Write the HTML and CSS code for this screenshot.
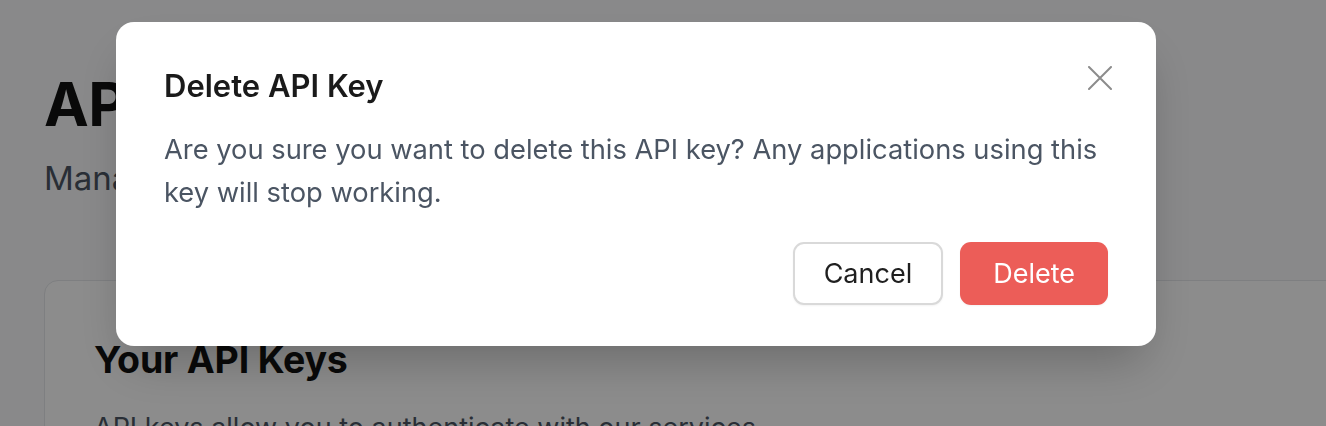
FILE: index.html
```html
<!DOCTYPE html>
<html lang="en">
<head>
<meta charset="utf-8">
<title>API Keys</title>
<link rel="stylesheet" href="styles.css">
</head>
<body>
<main class="page">
  <h1 class="page-title">API Keys</h1>
  <p class="page-subtitle">Manage your API keys and access tokens.</p>
  <section class="card">
    <h2 class="card-title">Your API Keys</h2>
    <p class="card-desc">API keys allow you to authenticate with our services.</p>
  </section>
</main>

<div class="overlay">
  <div class="modal" role="dialog" aria-modal="true">
    <button class="close" aria-label="Close">
      <svg viewBox="0 0 24 24" width="24" height="24" fill="none" stroke="currentColor" stroke-width="2" stroke-linecap="round">
        <path d="M1 1 23 23M23 1 1 23"/>
      </svg>
    </button>
    <h3 class="modal-title">Delete API Key</h3>
    <p class="modal-body">Are you sure you want to delete this API key? Any applications using this key will stop working.</p>
    <div class="actions">
      <button class="btn btn-cancel">Cancel</button>
      <button class="btn btn-delete">Delete</button>
    </div>
  </div>
</div>
</body>
</html>
```

FILE: styles.css
```css
* { box-sizing: border-box; }
html, body { margin: 0; padding: 0; }
body {
  background: #f9fafb;
  font-family: Inter, "Noto Sans", "Liberation Sans", sans-serif;
  overflow: hidden;
  width: 1326px;
  height: 426px;
}
.page {
  padding: 74px 0 0 44px;
  width: 1500px;
}
.page-title {
  margin: 0;
  font-size: 60px;
  line-height: 60px;
  font-weight: 700;
  color: #111111;
  letter-spacing: -0.5px;
}
.page-subtitle {
  margin: 22px 0 0;
  font-size: 33px;
  line-height: 44px;
  color: #4b5563;
}
.card {
  margin-top: 80px;
  background: #ffffff;
  border: 1px solid #e5e7eb;
  border-radius: 14px;
  padding: 57px 49px;
  height: 400px;
}
.card-title {
  margin: 0;
  font-size: 37.5px;
  line-height: 44px;
  font-weight: 700;
  color: #111111;
  letter-spacing: -0.2px;
}
.card-desc {
  margin: 26px 0 0;
  font-size: 27px;
  line-height: 40px;
  color: #4b5563;
}

.overlay {
  position: fixed;
  inset: 0;
  background: rgba(0, 0, 0, 0.45);
  display: flex;
  align-items: flex-start;
  padding: 22px 0 0 116px;
}
.modal {
  position: relative;
  width: 1040px;
  background: #ffffff;
  border-radius: 18px;
  padding: 46px 48px 41px;
  box-shadow: 0 25px 50px -12px rgba(0, 0, 0, 0.25);
}
.close {
  position: absolute;
  top: 44px;
  right: 44px;
  width: 24px;
  height: 24px;
  padding: 0;
  border: 0;
  background: none;
  color: #8c8c8c;
  display: flex;
}
.modal-title {
  margin: 0;
  font-size: 31px;
  line-height: 36px;
  font-weight: 600;
  color: #1a1a1a;
}
.modal-body {
  margin: 24px 0 0;
  font-size: 27.3px;
  line-height: 43px;
  color: #4b5563;
}
.actions {
  margin-top: 28px;
  display: flex;
  justify-content: flex-end;
  gap: 17px;
}
.btn {
  height: 63px;
  border-radius: 11px;
  font-family: inherit;
  font-size: 27px;
  line-height: 1;
  cursor: pointer;
}
.btn-cancel {
  padding: 0 29px;
  background: #ffffff;
  color: #1f1f1f;
  border: 2px solid #d9d9d9;
  box-shadow: 0 1px 2px rgba(0, 0, 0, 0.05);
}
.btn-delete {
  padding: 0 33px;
  background: #ec5d58;
  color: #ffffff;
  border: 0;
  box-shadow: 0 1px 2px rgba(0, 0, 0, 0.05);
}
```
